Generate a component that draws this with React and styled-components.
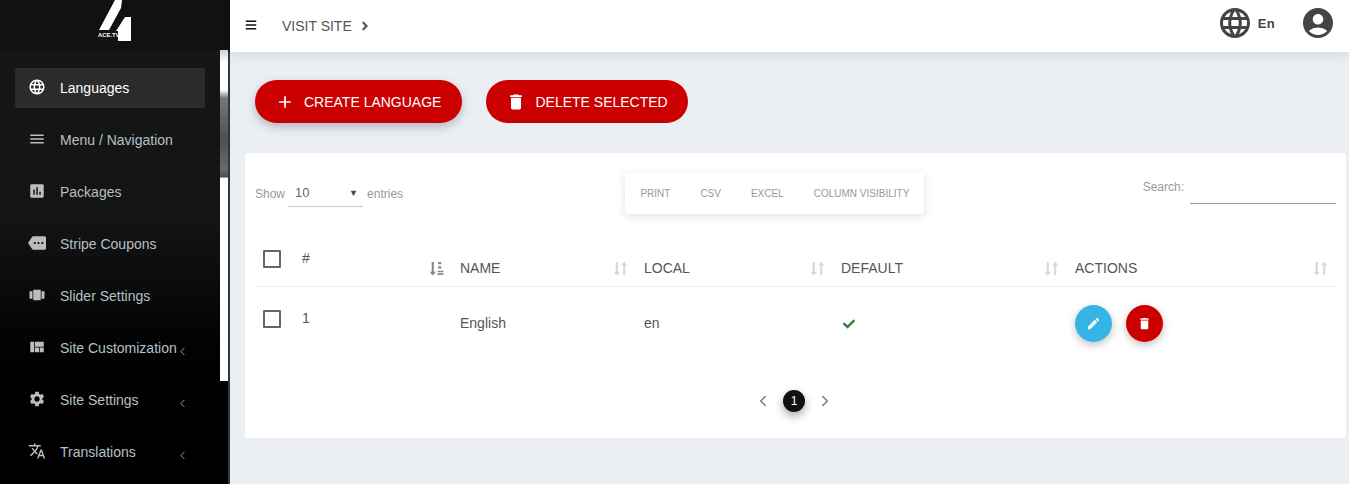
import React from 'react';
import styled, { createGlobalStyle } from 'styled-components';
import {
  MdLanguage, MdMenu, MdAssessment, MdMore, MdViewCarousel, MdViewQuilt, MdSettings,
  MdTranslate, MdAdd, MdDelete, MdEdit, MdAccountCircle,
} from 'react-icons/md';
import { FaAngleRight, FaBars, FaCheck } from 'react-icons/fa';
import { ChevronLeft, ChevronRight } from 'lucide-react';

const GlobalStyle = createGlobalStyle`
  html, body { margin: 0; height: 100%; overflow: hidden; }
  body { font-family: "Liberation Sans", Arial, sans-serif; background: #ebeef3; }
  * { box-sizing: border-box; }
`;

const Page = styled.div`
  display: flex;
  height: 100vh;
  width: 100%;
`;

const Sidebar = styled.aside`
  position: relative;
  flex: 0 0 230px;
  height: 100%;
  overflow: hidden;
  background: linear-gradient(180deg, #161616 0%, #141414 45%, #020202 72%, #000 100%);
  &::after {
    content: '';
    position: absolute;
    top: 52px;
    bottom: 0;
    right: 0;
    width: 2px;
    background: #2b3742;
  }
`;

const Scrollbar = styled.div`
  position: absolute;
  top: 50px;
  left: 220px;
  width: 8px;
  height: 331px;
  background: linear-gradient(180deg,
    #cfcfcf 0, #fff 12px, #fff 40px, #777 48px, #505050 90px, #6a6a6a 120px, #4a4a4a 127px,
    #fff 128px, #fff 100%);
`;

const LogoBar = styled.div`
  height: 50px;
  background: #111;
  display: flex;
  justify-content: center;
  position: relative;
`;

const LogoText = styled.span`
  position: absolute;
  left: 98px;
  top: 31px;
  font-size: 6px;
  line-height: 9px;
  font-weight: bold;
  letter-spacing: -0.1px;
  color: #fff;
`;

const Nav = styled.nav`
  padding: 18px 25px 0 15px;
  display: flex;
  flex-direction: column;
  gap: 12px;
`;

const NavItem = styled.div`
  height: 40px;
  display: flex;
  align-items: center;
  padding-left: 13px;
  border-radius: 3px;
  position: relative;
  background: ${(p) => (p.$active ? '#2c2c2c' : 'transparent')};
  color: ${(p) => (p.$active ? '#fff' : '#b4c0c8')};
  font-size: 14px;
  white-space: nowrap;
`;

const NavIcon = styled.span`
  width: 32px;
  display: flex;
  font-size: 18px;
  color: ${(p) => (p.$active ? '#fff' : '#bdbdbd')};
  transform: translateY(-1px);
`;

const NavArrow = styled.span`
  position: absolute;
  left: 161px;
  top: 17px;
  display: flex;
  color: #9a9a9a;
`;

const Main = styled.main`
  flex: 1;
  min-width: 0;
`;

const Topbar = styled.header`
  height: 52px;
  background: #fff;
  box-shadow: 0 2px 12px rgba(60, 70, 90, 0.16);
  display: flex;
  align-items: center;
  padding: 0 13px 3px 15px;
`;

const MenuButton = styled.span`
  display: flex;
  font-size: 12px;
  color: #111;
  margin-right: 25px;
`;

const VisitLink = styled.span`
  display: flex;
  align-items: center;
  gap: 6px;
  font-size: 14px;
  color: #555;
  padding-top: 2px;
`;

const TopRight = styled.div`
  margin-left: auto;
  margin-bottom: 3px;
  display: flex;
  align-items: center;
  color: #444;
`;

const LangLabel = styled.span`
  font-size: 13px;
  font-weight: bold;
  margin: 0 25px 0 5px;
  letter-spacing: 0.3px;
`;

const Content = styled.div`
  padding: 28px 3px 0 15px;
`;

const Actions = styled.div`
  display: flex;
  gap: 24px;
  padding-left: 10px;
`;

const PillButton = styled.button`
  height: 43px;
  border: 0;
  border-radius: 22px;
  background: #cc0000;
  color: #fff;
  font: 14px "Liberation Sans", Arial, sans-serif;
  text-transform: uppercase;
  display: flex;
  align-items: center;
  gap: 9px;
  padding: 0 ${(p) => (p.$shadow ? '21px' : '20px')} 0 20px;
  box-shadow: ${(p) => (p.$shadow ? '0 4px 10px rgba(60, 60, 80, 0.3)' : 'none')};
`;

const Card = styled.section`
  margin-top: 30px;
  height: 285px;
  background: #fff;
  border-radius: 3px;
  padding: 20px 10px 0;
`;

const Controls = styled.div`
  display: flex;
  justify-content: space-between;
  align-items: flex-start;
`;

const LengthControl = styled.label`
  display: flex;
  align-items: center;
  height: 34px;
  padding-top: 8px;
  font-size: 12px;
  color: #999;
  gap: 3px;
`;

const FakeSelect = styled.span`
  width: 75px;
  height: 26px;
  margin-right: 1px;
  border-bottom: 1px solid #ccc;
  display: flex;
  align-items: center;
  justify-content: space-between;
  padding: 0 5px 2px 7px;
  font-size: 13px;
  color: #666;
  small { font-size: 9px; color: #444; }
`;

const ButtonGroup = styled.div`
  display: flex;
  height: 41px;
  align-items: center;
  margin-left: 4px;
  border-radius: 3px;
  box-shadow: 0 2px 10px rgba(0, 0, 0, 0.13);
  padding: 0 15px;
  gap: 30px;
  font-size: 10px;
  color: #999;
`;

const SearchControl = styled.label`
  display: flex;
  gap: 6px;
  font-size: 12px;
  color: #999;
  height: 31px;
  line-height: 29px;
`;

const SearchInput = styled.span`
  display: block;
  width: 146px;
  height: 31px;
  border-bottom: 1px solid #999;
`;

const Table = styled.table`
  width: 1081px;
  margin-top: 22px;
  table-layout: fixed;
  border-collapse: collapse;
  color: #555;
  font-size: 14px;
`;

const HeadCell = styled.th`
  position: relative;
  height: 50px;
  padding: 0 8px 10px;
  font-weight: normal;
  text-align: left;
  text-transform: uppercase;
  vertical-align: ${(p) => (p.$top ? 'top' : 'bottom')};
  padding-top: ${(p) => (p.$top ? '14px' : '0')};
  border-bottom: 1px solid #eee;
`;

const Cell = styled.td`
  height: 74px;
  padding: 0 8px;
  vertical-align: middle;
  padding-bottom: ${(p) => p.$raise || 0}px;
  line-height: 16px;
  color: #555;
`;

const CheckBox = styled.span`
  display: block;
  width: 18px;
  height: 18px;
  border: 2px solid #666;
  border-radius: 1px;
`;

const CheckMark = styled(FaCheck)`
  display: block;
  margin: 2px 0 0 2px;
  font-size: 12px;
  color: #3a7d44;
`;

const SortIcon = styled.svg`
  position: absolute;
  right: 8px;
  bottom: 10px;
  width: 15px;
  height: 15px;
`;

const RoundRow = styled.div`
  display: flex;
  gap: 14px;
`;

const RoundButton = styled.span`
  width: 37px;
  height: 37px;
  border-radius: 50%;
  background: ${(p) => p.$color};
  color: #fff;
  display: flex;
  align-items: center;
  justify-content: center;
  font-size: 15px;
  box-shadow: 0 3px 8px rgba(0, 0, 0, 0.25);
`;

const Pagination = styled.div`
  display: flex;
  justify-content: center;
  align-items: center;
  gap: 11px;
  margin-top: 30px;
  color: #777;
  padding-right: 3px;
`;

const PageDot = styled.span`
  width: 22px;
  height: 22px;
  border-radius: 50%;
  background: #111;
  color: #fff;
  font-size: 12px;
  display: flex;
  align-items: center;
  justify-content: center;
  box-shadow: 0 4px 10px rgba(0, 0, 0, 0.35);
`;

const navItems = [
  { label: 'Languages', icon: <MdLanguage />, active: true },
  { label: 'Menu / Navigation', icon: <MdMenu /> },
  { label: 'Packages', icon: <MdAssessment /> },
  { label: 'Stripe Coupons', icon: <MdMore /> },
  { label: 'Slider Settings', icon: <MdViewCarousel /> },
  { label: 'Site Customization', icon: <MdViewQuilt />, arrow: true },
  { label: 'Site Settings', icon: <MdSettings />, arrow: true },
  { label: 'Translations', icon: <MdTranslate />, arrow: true },
];

const Logo = () => (
  <svg width="40" height="42" viewBox="95 0 40 42" fill="#fff">
    <polygon points="115,0 122,0 121,8 109,30 99,30" />
    <polygon points="125,17 131,17 131,41 118,41 118,31 116,31" />
  </svg>
);

const Sort = () => (
  <SortIcon viewBox="0 0 14 14" fill="#d8d8d8">
    <path d="M2.5 1h2v9h2l-3 3.5-3-3.5h2zM9.5 13h2V4h2l-3-3.5L7.5 4h2z" />
  </SortIcon>
);

const SortActive = () => (
  <SortIcon viewBox="0 0 14 14" fill="#888">
    <path d="M2.5 1h2v9h2l-3 3.5-3-3.5h2z" />
    <path d="M8.5 1h3v2h-3zM8.5 5h3v2h-3zM8 9h5.5v1.5H8zM8 11.5h5.5V13H8z" />
  </SortIcon>
);

export default function App() {
  return (
    <Page>
      <GlobalStyle />
      <Sidebar>
        <LogoBar>
          <Logo />
          <LogoText>ACE.TV</LogoText>
        </LogoBar>
        <Nav>
          {navItems.map((item) => (
            <NavItem key={item.label} $active={item.active}>
              <NavIcon $active={item.active}>{item.icon}</NavIcon>
              {item.label}
              {item.arrow && <NavArrow><ChevronLeft size={13} strokeWidth={1.8} /></NavArrow>}
            </NavItem>
          ))}
        </Nav>
        <Scrollbar />
      </Sidebar>
      <Main>
        <Topbar>
          <MenuButton><FaBars /></MenuButton>
          <VisitLink>VISIT SITE <FaAngleRight size={14} /></VisitLink>
          <TopRight>
            <MdLanguage size={36} />
            <LangLabel>En</LangLabel>
            <MdAccountCircle size={36} />
          </TopRight>
        </Topbar>
        <Content>
          <Actions>
            <PillButton $shadow><MdAdd size={20} />Create Language</PillButton>
            <PillButton><MdDelete size={20} />Delete Selected</PillButton>
          </Actions>
          <Card>
            <Controls>
              <LengthControl>
                Show <FakeSelect>10 <small>▼</small></FakeSelect> entries
              </LengthControl>
              <ButtonGroup>
                <span>PRINT</span>
                <span>CSV</span>
                <span>EXCEL</span>
                <span>COLUMN VISIBILITY</span>
              </ButtonGroup>
              <SearchControl>
                Search:
                <SearchInput />
              </SearchControl>
            </Controls>
            <Table>
              <colgroup>
                <col style={{ width: 39 }} />
                <col style={{ width: 158 }} />
                <col style={{ width: 184 }} />
                <col style={{ width: 197 }} />
                <col style={{ width: 234 }} />
                <col style={{ width: 269 }} />
              </colgroup>
              <thead>
                <tr>
                  <HeadCell $top><CheckBox /></HeadCell>
                  <HeadCell $top>#<SortActive /></HeadCell>
                  <HeadCell>Name<Sort /></HeadCell>
                  <HeadCell>Local<Sort /></HeadCell>
                  <HeadCell>Default<Sort /></HeadCell>
                  <HeadCell>Actions<Sort /></HeadCell>
                </tr>
              </thead>
              <tbody>
                <tr>
                  <Cell $raise={8}><CheckBox /></Cell>
                  <Cell $raise={10}>1</Cell>
                  <Cell>English</Cell>
                  <Cell>en</Cell>
                  <Cell><CheckMark /></Cell>
                  <Cell>
                    <RoundRow>
                      <RoundButton $color="#35b5e5"><MdEdit /></RoundButton>
                      <RoundButton $color="#cc0000"><MdDelete /></RoundButton>
                    </RoundRow>
                  </Cell>
                </tr>
              </tbody>
            </Table>
            <Pagination>
              <ChevronLeft size={18} strokeWidth={2} />
              <PageDot>1</PageDot>
              <ChevronRight size={18} strokeWidth={2} />
            </Pagination>
          </Card>
        </Content>
      </Main>
    </Page>
  );
}
